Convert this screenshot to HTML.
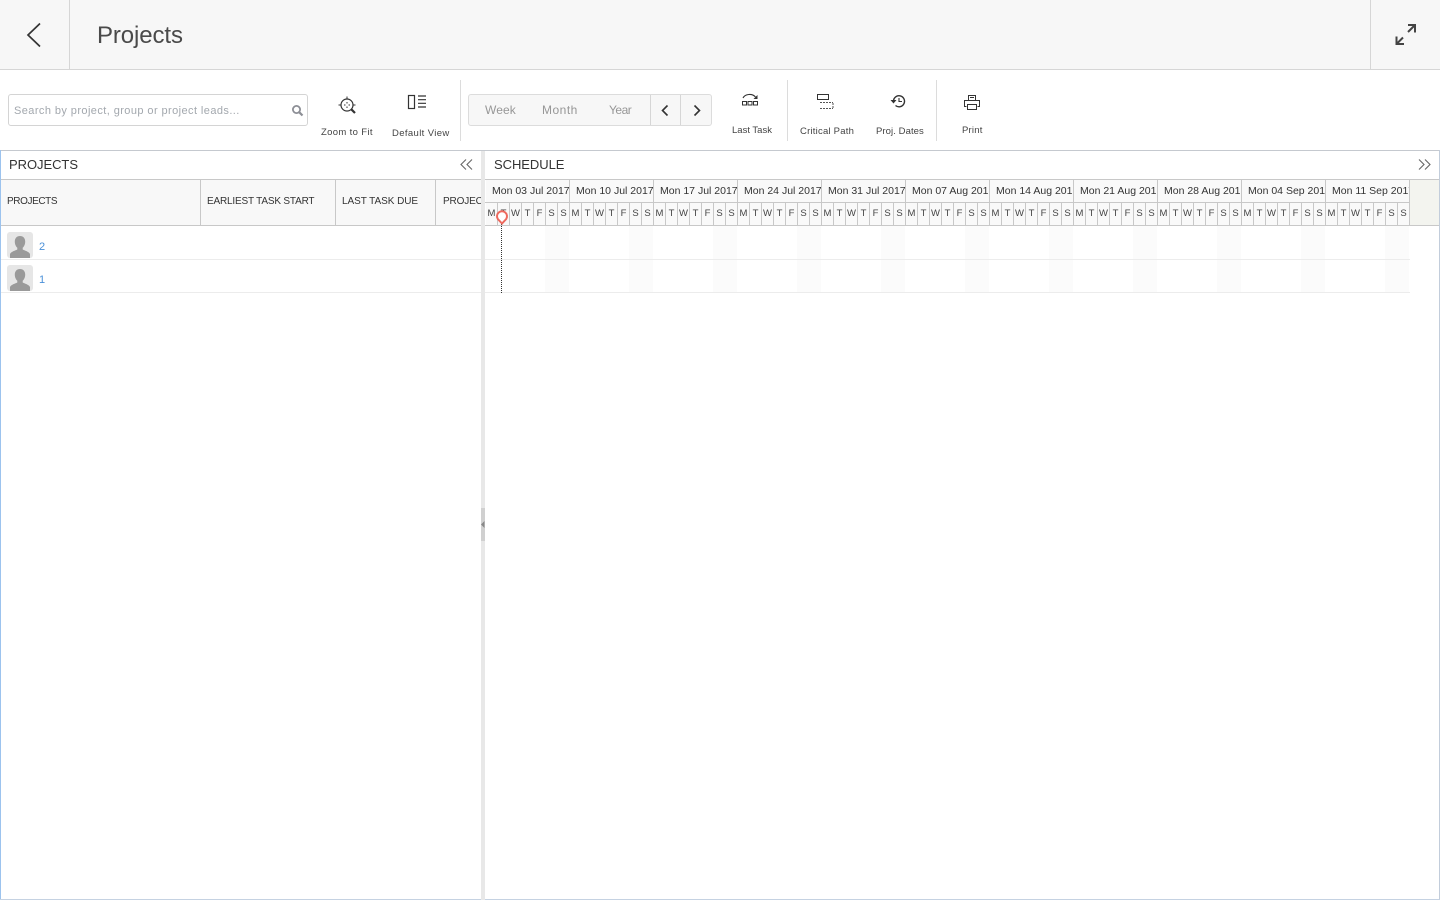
<!DOCTYPE html>
<html><head><meta charset="utf-8"><title>Projects</title>
<style>
html,body{margin:0;padding:0;width:1440px;height:900px;overflow:hidden;background:#fff;font-family:"Liberation Sans",sans-serif;color:#333}
.a{position:absolute}
.lbl{position:absolute;font-size:9.5px;color:#444;white-space:nowrap;letter-spacing:.2px}
.th{position:absolute;top:196px;font-size:10px;color:#333;white-space:nowrap;letter-spacing:-.15px}
.wk{position:absolute;top:180px;height:22px;width:83px;border-right:1px solid #c8c8c8;overflow:hidden;white-space:nowrap;font-size:10.5px;line-height:22px;padding:0;color:#333;background:#f9f9f9}
.wk span{margin-left:6px}
.dr{position:absolute;top:203px;left:486px;height:22px;display:flex;font-size:9.5px;color:#444}
.dr span{width:11px;border-right:1px solid #c8c8c8;text-align:center;line-height:21px;overflow:hidden;background:#f9f9f9;flex:none}
.ws{position:absolute;top:226px;height:66px;width:24px;background:#fbfbfb}
svg{position:absolute;display:block}
</style></head><body>
<!-- top bar -->
<div class="a" style="left:0;top:0;width:1440px;height:69px;background:#f7f7f7;border-bottom:1px solid #d6d6d6"></div>
<div class="a" style="left:69px;top:0;width:1px;height:69px;background:#d6d6d6"></div>
<div class="a" style="left:1370px;top:0;width:1px;height:69px;background:#d6d6d6"></div>
<svg style="left:24px;top:21px" width="20" height="28" viewBox="0 0 20 28"><path d="M16 2.500 4 14l12 11.500" fill="none" stroke="#333" stroke-width="1.700"/></svg>
<div class="a" style="left:97px;top:21px;font-size:24px;line-height:30px;color:#4a4a4a;letter-spacing:-.1px">Projects</div>
<svg style="left:1393px;top:22px" width="24" height="24" viewBox="0 0 24 24"><path d="M15 3h7v7.500M21.500 3.500 15 10" fill="none" stroke="#444" stroke-width="2"/><path d="M3.500 14.500v7.500h7.500M3.500 22 10 15.500" fill="none" stroke="#444" stroke-width="2"/></svg>

<!-- toolbar -->
<div class="a" style="left:8px;top:94px;width:298px;height:30px;border:1px solid #d4d4d4;border-radius:3px;background:#fff"></div>
<div class="a" style="left:14px;top:104px;font-size:11px;line-height:14px;color:#a3a8ae;letter-spacing:.42px;white-space:nowrap">Search by project, group or project leads...</div>
<svg style="left:291px;top:104px" width="13" height="13" viewBox="0 0 13 13"><circle cx="5.500" cy="5.500" r="3.600" fill="none" stroke="#8d8f96" stroke-width="1.800"/><path d="M8.200 8.200 11.500 11.500" stroke="#8d8f96" stroke-width="2.200"/></svg>

<svg style="left:337px;top:95px" width="20" height="20" viewBox="0 0 20 20"><circle cx="10" cy="10" r="6" fill="none" stroke="#333" stroke-width="1.200"/><path d="M14.300 14.300 18 18" stroke="#333" stroke-width="2.200"/><path d="M10 1.500v2M1.500 10h2M16.500 10h2M10 7v1.500M10 11.500v1.500M7 10h1.500M11.500 10h1.500" stroke="#333" stroke-width="1"/></svg>
<div class="lbl" style="left:321px;top:127px;letter-spacing:.35px">Zoom to Fit</div>
<svg style="left:407px;top:94px" width="20" height="16" viewBox="0 0 20 16"><rect x="1.500" y="1.500" width="6" height="13" fill="none" stroke="#333" stroke-width="1.200"/><path d="M11 2h8M11 5.700h8M11 9.300h8M11 13h8" stroke="#333" stroke-width="1.200"/></svg>
<div class="lbl" style="left:392px;top:128px;letter-spacing:.37px">Default View</div>
<div class="a" style="left:460px;top:80px;width:1px;height:61px;background:#dcdcdc"></div>

<div class="a" style="left:468px;top:94px;width:242px;height:30px;border:1px solid #dcdcdc;border-radius:3px;background:#f7f7f7"></div>
<div class="a" style="left:650px;top:95px;width:1px;height:30px;background:#d6d6d6"></div>
<div class="a" style="left:680px;top:95px;width:1px;height:30px;background:#d6d6d6"></div>
<div class="a" style="left:485px;top:103px;font-size:12px;line-height:14px;color:#979797;letter-spacing:.1px">Week</div>
<div class="a" style="left:542px;top:103px;font-size:12px;line-height:14px;color:#979797;letter-spacing:.5px">Month</div>
<div class="a" style="left:609px;top:103px;font-size:12px;line-height:14px;color:#979797;letter-spacing:-.5px">Year</div>
<svg style="left:660px;top:104px" width="10" height="13" viewBox="0 0 10 13"><path d="M7.500 1.500 2.500 6.500l5 5" fill="none" stroke="#333" stroke-width="1.600"/></svg>
<svg style="left:692px;top:104px" width="10" height="13" viewBox="0 0 10 13"><path d="M2.500 1.500 7.500 6.500l-5 5" fill="none" stroke="#333" stroke-width="1.600"/></svg>

<svg style="left:740px;top:93px" width="20" height="14" viewBox="0 0 20 14"><path d="M3 5C5 1 12 0 15.500 4" fill="none" stroke="#333" stroke-width="1.100"/><path d="M17.500 2v4h-4z" fill="#333"/><path d="M2.500 8.500h4v3.500h-4zM8 8.500h4v3.500H8zM13.500 8.500h4v3.500h-4z" fill="none" stroke="#333" stroke-width="1"/></svg>
<div class="lbl" style="left:732px;top:125px;letter-spacing:0">Last Task</div>
<div class="a" style="left:787px;top:80px;width:1px;height:61px;background:#dcdcdc"></div>
<svg style="left:815px;top:93px" width="20" height="18" viewBox="0 0 20 18"><rect x="2.500" y="1.500" width="11" height="5" fill="none" stroke="#333"/><path d="M5 9.500h13M5 15.500h13M18 10v5" fill="none" stroke="#555" stroke-dasharray="2 1"/></svg>
<div class="lbl" style="left:800px;top:126px;letter-spacing:.22px">Critical Path</div>
<svg style="left:889px;top:93px" width="18" height="16" viewBox="0 0 18 16"><path d="M4.500 8A5.500 5.500 0 1 1 6.500 12.500" fill="none" stroke="#333" stroke-width="1.400"/><path d="M1.500 7h6l-3 3.500z" fill="#333"/><path d="M10 5v3.500h3" fill="none" stroke="#333" stroke-width="1.100"/></svg>
<div class="lbl" style="left:876px;top:126px;letter-spacing:.08px">Proj. Dates</div>
<div class="a" style="left:936px;top:80px;width:1px;height:61px;background:#dcdcdc"></div>
<svg style="left:963px;top:94px" width="18" height="17" viewBox="0 0 18 17"><path d="M5.500 6V1.500h7V6M3.500 12.500h-2V6.500h15v6h-2M4.500 10.500h9v5h-9zM7 3.500h4" fill="none" stroke="#333" stroke-width="1"/></svg>
<div class="lbl" style="left:962px;top:125px">Print</div>

<!-- panels frame -->
<div class="a" style="left:0;top:150px;width:1440px;height:1px;background:#c5c9cf"></div>
<div class="a" style="left:0;top:150px;width:1px;height:750px;background:#9cc3ee"></div>
<div class="a" style="left:1439px;top:150px;width:1px;height:750px;background:#c2cddb"></div>
<div class="a" style="left:0;top:899px;width:1440px;height:1px;background:#c5d2e2"></div>
<div class="a" style="left:481px;top:151px;width:4px;height:749px;background:#e8e8e8"></div>
<div class="a" style="left:481px;top:508px;width:4px;height:33px;background:#d0d0d0"></div>
<svg style="left:481px;top:521px" width="4" height="7" viewBox="0 0 4 7"><path d="M3.500 0v7L0 3.500z" fill="#888"/></svg>

<!-- left panel -->
<div class="a" style="left:9px;top:157px;font-size:13px;line-height:16px;color:#333;letter-spacing:-.05px">PROJECTS</div>
<svg style="left:460px;top:158px" width="13" height="13" viewBox="0 0 13 13"><path d="M6 1.500 1 6.500 6 11.500M12 1.500 7 6.500 12 11.500" fill="none" stroke="#666" stroke-width="1.100"/></svg>
<div class="a" style="left:1px;top:179px;width:480px;height:45px;background:#f8f8f8;border-top:1px solid #c8c8c8;border-bottom:1px solid #c8c8c8"></div>
<div class="a" style="left:200px;top:180px;width:1px;height:45px;background:#c8c8c8"></div>
<div class="a" style="left:335px;top:180px;width:1px;height:45px;background:#c8c8c8"></div>
<div class="a" style="left:435px;top:180px;width:1px;height:45px;background:#c8c8c8"></div>
<div class="th" style="left:7px;letter-spacing:-.4px">PROJECTS</div>
<div class="th" style="left:207px;letter-spacing:-.18px">EARLIEST TASK START</div>
<div class="th" style="left:342px;letter-spacing:-.05px">LAST TASK DUE</div>
<div class="th" style="left:443px;width:38px;overflow:hidden">PROJECT</div>
<div class="a" style="left:1px;top:259px;width:480px;height:1px;background:#ececec"></div>
<div class="a" style="left:1px;top:292px;width:480px;height:1px;background:#ececec"></div>
<svg style="left:7px;top:232px" width="26" height="26" viewBox="0 0 26 26"><rect width="26" height="26" rx="3" fill="#e6e6e6"/><path d="M13 4c3.200 0 5.200 2.300 5.200 5.500 0 2.700-1 5-2.500 6.200v1.800c2.500 1.300 6 2 7.300 4.500V26H3v-4c1.300-2.500 4.800-3.200 7.300-4.500v-1.800C8.800 14.500 7.800 12.200 7.800 9.500 7.800 6.300 9.800 4 13 4z" fill="#9a9a9a"/></svg>
<svg style="left:7px;top:265px" width="26" height="26" viewBox="0 0 26 26"><rect width="26" height="26" rx="3" fill="#e6e6e6"/><path d="M13 4c3.200 0 5.200 2.300 5.200 5.500 0 2.700-1 5-2.500 6.200v1.800c2.500 1.300 6 2 7.300 4.500V26H3v-4c1.300-2.500 4.800-3.200 7.300-4.500v-1.800C8.800 14.500 7.800 12.200 7.800 9.500 7.800 6.300 9.800 4 13 4z" fill="#9a9a9a"/></svg>
<div class="a" style="left:39px;top:241px;font-size:11px;line-height:13px;color:#4a90d9">2</div>
<div class="a" style="left:39px;top:274px;font-size:11px;line-height:13px;color:#4a90d9">1</div>

<!-- right panel -->
<div class="a" style="left:494px;top:157px;font-size:13px;line-height:16px;color:#333;letter-spacing:-.05px">SCHEDULE</div>
<svg style="left:1418px;top:158px" width="13" height="13" viewBox="0 0 13 13"><path d="M1 1.500 6 6.500 1 11.500M7 1.500 12 6.500 7 11.500" fill="none" stroke="#666" stroke-width="1.100"/></svg>
<div class="a" style="left:485px;top:179px;width:954px;height:1px;background:#c8c8c8"></div>
<div class="a" style="left:485px;top:202px;width:925px;height:1px;background:#c8c8c8"></div>
<div class="a" style="left:485px;top:225px;width:954px;height:1px;background:#c8c8c8"></div>
<div class="a" style="left:1410px;top:180px;width:29px;height:45px;background:#f3f4ef"></div>
<div class="wk" style="left:486px"><span>Mon 03 Jul 2017</span></div>
<div class="wk" style="left:570px"><span>Mon 10 Jul 2017</span></div>
<div class="wk" style="left:654px"><span>Mon 17 Jul 2017</span></div>
<div class="wk" style="left:738px"><span>Mon 24 Jul 2017</span></div>
<div class="wk" style="left:822px"><span>Mon 31 Jul 2017</span></div>
<div class="wk" style="left:906px"><span>Mon 07 Aug 2017</span></div>
<div class="wk" style="left:990px"><span>Mon 14 Aug 2017</span></div>
<div class="wk" style="left:1074px"><span>Mon 21 Aug 2017</span></div>
<div class="wk" style="left:1158px"><span>Mon 28 Aug 2017</span></div>
<div class="wk" style="left:1242px"><span>Mon 04 Sep 2017</span></div>
<div class="wk" style="left:1326px"><span>Mon 11 Sep 2017</span></div>
<div class="dr"><span>M</span><span>T</span><span>W</span><span>T</span><span>F</span><span>S</span><span>S</span><span>M</span><span>T</span><span>W</span><span>T</span><span>F</span><span>S</span><span>S</span><span>M</span><span>T</span><span>W</span><span>T</span><span>F</span><span>S</span><span>S</span><span>M</span><span>T</span><span>W</span><span>T</span><span>F</span><span>S</span><span>S</span><span>M</span><span>T</span><span>W</span><span>T</span><span>F</span><span>S</span><span>S</span><span>M</span><span>T</span><span>W</span><span>T</span><span>F</span><span>S</span><span>S</span><span>M</span><span>T</span><span>W</span><span>T</span><span>F</span><span>S</span><span>S</span><span>M</span><span>T</span><span>W</span><span>T</span><span>F</span><span>S</span><span>S</span><span>M</span><span>T</span><span>W</span><span>T</span><span>F</span><span>S</span><span>S</span><span>M</span><span>T</span><span>W</span><span>T</span><span>F</span><span>S</span><span>S</span><span>M</span><span>T</span><span>W</span><span>T</span><span>F</span><span>S</span><span>S</span></div>
<div class="ws" style="left:545px"></div><div class="ws" style="left:629px"></div><div class="ws" style="left:713px"></div><div class="ws" style="left:797px"></div><div class="ws" style="left:881px"></div><div class="ws" style="left:965px"></div><div class="ws" style="left:1049px"></div><div class="ws" style="left:1133px"></div><div class="ws" style="left:1217px"></div><div class="ws" style="left:1301px"></div><div class="ws" style="left:1385px"></div>
<div class="a" style="left:485px;top:259px;width:925px;height:1px;background:#ececec"></div>
<div class="a" style="left:485px;top:292px;width:925px;height:1px;background:#ececec"></div>
<div class="a" style="left:501px;top:224px;width:0;height:69px;border-left:1px dotted #333"></div>
<svg style="left:495px;top:210px" width="14" height="15" viewBox="0 0 14 15"><path d="M7 13.500 2.800 9A5 5 0 1 1 11.200 9z" fill="#fff" stroke="#ee6a5f" stroke-width="2"/></svg>
</body></html>
